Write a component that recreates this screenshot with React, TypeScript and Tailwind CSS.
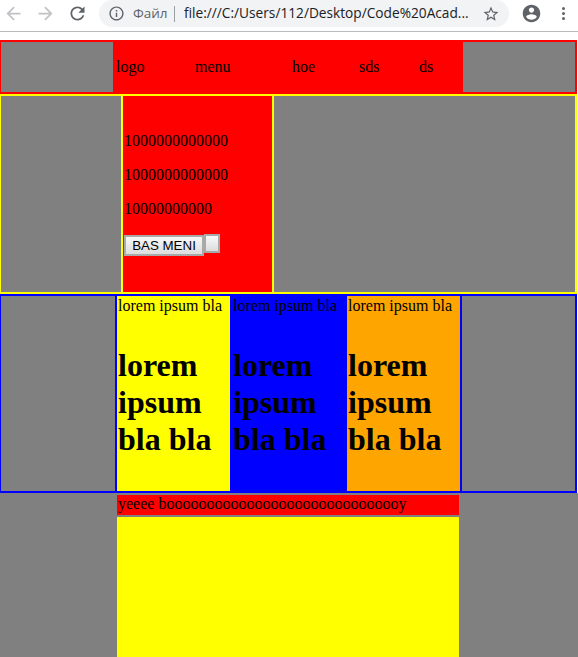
import React from "react";

function Ico({ d, className }: { d: string; className: string }) {
  return (
    <svg viewBox="0 0 24 24" fill="currentColor" className={className}>
      <path d={d} />
    </svg>
  );
}

function Toolbar() {
  return (
    <div className="h-10 bg-white shrink-0">
      <div className="h-8 border-b border-[#bbbbbb] flex items-start">
        <div className="flex items-center h-[27px] w-[99px] shrink-0">
          <Ico className="w-[21px] h-[21px] ml-[3px] text-[#c0c2c5]" d="M20 11H7.83l5.59-5.59L12 4l-8 8 8 8 1.41-1.41L7.83 13H20v-2z" />
          <Ico className="w-[21px] h-[21px] ml-[11px] text-[#c0c2c5]" d="M12 4l-1.41 1.41L16.17 11H4v2h12.17l-5.58 5.59L12 20l8-8z" />
          <Ico className="w-[21px] h-[21px] ml-[11px] text-[#5f6368]" d="M17.65 6.35C16.2 4.9 14.21 4 12 4c-4.42 0-7.99 3.58-7.99 8s3.57 8 7.99 8c3.73 0 6.84-2.55 7.73-6h-2.08c-.82 2.33-3.04 4-5.65 4-3.31 0-6-2.69-6-6s2.69-6 6-6c1.66 0 3.14.69 4.22 1.78L13 11h7V4l-2.35 2.35z" />
        </div>
        <div className="flex items-center h-[27px] w-[410px] shrink-0 rounded-[14px] bg-[#f1f3f4] font-['Open_Sans',sans-serif]">
          <Ico className="w-[17px] h-[17px] ml-[9px] text-[#5f6368]" d="M11 7h2v2h-2zm0 4h2v6h-2zm1-9C6.48 2 2 6.48 2 12s4.48 10 10 10 10-4.48 10-10S17.52 2 12 2zm0 18c-4.41 0-8-3.59-8-8s3.59-8 8-8 8 3.59 8 8-3.59 8-8 8z" />
          <span className="ml-2 w-[41px] text-[#5f6368] text-[13.5px]">Файл</span>
          <span className="h-4 w-px bg-[#9aa0a6]" />
          <span className="ml-[9px] w-[298px] text-[#202124] text-[13.7px] whitespace-nowrap">file:///C:/Users/112/Desktop/Code%20Acad...</span>
          <Ico className="w-[18px] h-[18px] text-[#5f6368]" d="M22 9.24l-7.19-.62L12 2 9.19 8.63 2 9.24l5.46 4.73L5.82 21 12 17.27 18.18 21l-1.63-7.03L22 9.24zM12 15.4l-3.76 2.27 1-4.28-3.32-2.88 4.38-.38L12 6.1l1.71 4.04 4.38.38-3.32 2.88 1 4.28L12 15.4z" />
        </div>
        <div className="flex items-center h-[27px] text-[#5f6368]">
          <Ico className="w-[21px] h-[21px] ml-3" d="M12 2C6.48 2 2 6.48 2 12s4.48 10 10 10 10-4.48 10-10S17.52 2 12 2zm0 3c1.66 0 3 1.34 3 3s-1.34 3-3 3-3-1.34-3-3 1.34-3 3-3zm0 14.2c-2.5 0-4.71-1.28-6-3.22.03-1.99 4-3.08 6-3.08 1.99 0 5.97 1.09 6 3.08-1.29 1.94-3.5 3.22-6 3.22z" />
          <div className="ml-5 flex flex-col gap-[2px]">
            <span className="w-[3px] h-[3px] rounded-full bg-[#5f6368]" />
            <span className="w-[3px] h-[3px] rounded-full bg-[#5f6368]" />
            <span className="w-[3px] h-[3px] rounded-full bg-[#5f6368]" />
          </div>
        </div>
      </div>
    </div>
  );
}

function Col({ bg, pad }: { bg: string; pad: string }) {
  return (
    <div className={`${bg} ${pad}`}>
      <p className="leading-[18px] mt-px whitespace-nowrap">lorem ipsum bla</p>
      <h1 className="mt-[32px] text-[32px] leading-[37px] font-bold">lorem ipsum bla bla</h1>
    </div>
  );
}

export default function App() {
  return (
    <div className="h-screen overflow-hidden bg-white flex flex-col font-['Liberation_Serif',serif] text-[16px] text-black">
      <Toolbar />
      <header className="w-[577px] h-[54px] shrink-0 border-2 border-l border-[#ff0000] flex bg-[#808080]">
        <div className="w-28" />
        <nav className="w-[350px] bg-[#ff0000] flex items-center pl-[3px] leading-[18px]">
          <span className="w-[79px]">logo</span>
          <span className="w-[97px]">menu</span>
          <span className="w-[67px]">hoe</span>
          <span className="w-[60px]">sds</span>
          <span>ds</span>
        </nav>
      </header>
      <section className="w-[577px] h-[200px] shrink-0 border-2 border-l border-[#ffff00] flex bg-[#808080]">
        <div className="w-[120px]" />
        <div className="w-[153px] border-x-2 border-[#ffff00] bg-[#ff0000] pl-px pt-9">
          <p className="leading-[18px]">1000000000000</p>
          <p className="leading-[18px] mt-4">1000000000000</p>
          <p className="leading-[18px] mt-4">10000000000</p>
          <div className="flex items-start mt-[8px]">
            <button className="mt-[9px] w-20 h-[21px] border-2 border-[#a9a9a9] bg-linear-to-b from-[#f8f8f8] to-[#dddddd] font-['Liberation_Sans',sans-serif] text-[13.33px] leading-[15px]">
              BAS MENI
            </button>
            <button className="mt-2 w-4 h-[19px] border-2 border-[#a9a9a9] bg-linear-to-b from-[#f8f8f8] to-[#dddddd]" />
          </div>
        </div>
      </section>
      <section className="w-[577px] h-[199px] shrink-0 border-2 border-l border-[#0000ff] flex bg-[#808080]">
        <div className="w-[114px]" />
        <div className="w-[347px] border-x-2 border-[#0000ff] grid grid-cols-[113px_117px_113px]">
          <Col bg="bg-[#ffff00]" pad="pl-px" />
          <Col bg="bg-[#0000ff]" pad="pl-[3px]" />
          <Col bg="bg-[#ffa500]" pad="pl-px" />
        </div>
      </section>
      <section className="flex-1 bg-[#808080] pt-0.5 pl-[117px]">
        <div className="w-[342px] flex flex-col h-full">
          <div className="h-5 bg-[#ff0000] pl-px leading-[18px] whitespace-nowrap">yeeee boooooooooooooooooooooooooooooy</div>
          <div className="mt-0.5 flex-1 bg-[#ffff00]" />
        </div>
      </section>
    </div>
  );
}
